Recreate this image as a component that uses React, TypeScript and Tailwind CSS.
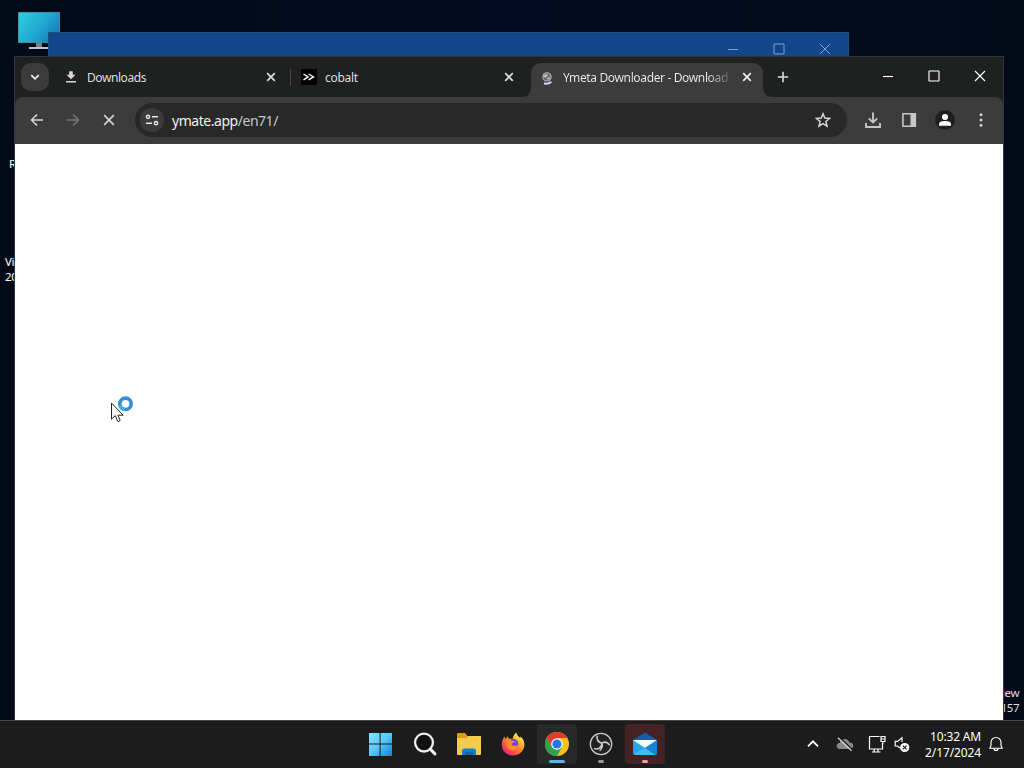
import React from "react";

const CloseIcon = ({ className = "" }: { className?: string }) => (
  <svg viewBox="0 0 16 16" className={`h-4 w-4 shrink-0 ${className}`} fill="none" stroke="currentColor" strokeWidth="1.7">
    <path d="M4.2 4.2l7.6 7.6M11.8 4.2l-7.6 7.6" />
  </svg>
);

const WindowControls = ({ thin = false }: { thin?: boolean }) => (
  <div className="flex">
    {["M6 11.5h10", "M6.5 6h9q.5 0 .5.5v9q0 .5-.5.5h-9q-.5 0-.5-.5v-9q0-.5.5-.5z", "M6 6l10 10M16 6L6 16"].map((d) => (
      <div key={d} className="flex h-full w-[46px] items-center justify-center">
        <svg viewBox="0 0 22 22" className="h-[22px] w-[22px]" fill="none" stroke="currentColor" strokeWidth={thin ? 0.9 : 1.15}>
          <path d={d} />
        </svg>
      </div>
    ))}
  </div>
);

const ToolButton = ({ children, className = "" }: { children: React.ReactNode; className?: string }) => (
  <div className={`flex w-9 items-center justify-center ${className}`}>{children}</div>
);

const TabStrip = () => (
  <div className="flex h-10 items-center bg-[#1f2020] text-[12px] text-[#dedede]">
    <div className="ml-1.5 flex h-7 w-7 shrink-0 items-center justify-center rounded-[10px] bg-[#3b3b3b]">
      <svg viewBox="0 0 12 12" className="h-3 w-3" fill="none" stroke="#eee" strokeWidth="1.7">
        <path d="M2.3 4.2L6 7.9l3.7-3.7" />
      </svg>
    </div>

    <div className="ml-2 flex w-[233px] items-center pl-1.5 pr-[11px]">
      <svg viewBox="0 0 16 16" className="h-4 w-4" fill="#d8d8d8">
        <path d="M6.2 2.2h3.6v3.5h2.7L8 10.3 3.5 5.7h2.7zM3 12h10v1.6H3z" />
      </svg>
      <span className="ml-2 flex-1 pt-0.5 tracking-[-0.035em]">Downloads</span>
      <CloseIcon />
    </div>
    <div className="h-[17px] w-px bg-[#4a4a4a]" />

    <div className="flex w-60 items-center pl-2.5 pr-3.5">
      <svg viewBox="0 0 16 16" className="h-4 w-4" fill="none" stroke="#fff" strokeWidth="1.4">
        <path d="M0 0h16v16H0z" fill="#000" stroke="none" />
        <path d="M2.5 5l4.7 2.9-4.7 3M7.6 5l4.9 2.9-4.9 3" />
      </svg>
      <span className="ml-2 flex-1 pt-0.5 tracking-[-0.025em]">cobalt</span>
      <CloseIcon />
    </div>

    <div className="relative flex h-[34px] w-[232px] items-center self-end rounded-t-[10px] bg-[#3c3c3c] px-2 pb-1.5">
      <svg viewBox="0 0 10 10" className="absolute -left-2.5 bottom-0 h-2.5 w-2.5" fill="#3c3c3c">
        <path d="M10 0v10H0Q10 10 10 0" />
      </svg>
      <svg viewBox="0 0 10 10" className="absolute -right-2.5 bottom-0 h-2.5 w-2.5" fill="#3c3c3c">
        <path d="M0 0v10h10Q0 10 0 0" />
      </svg>
      <svg viewBox="0 0 16 16" className="mt-px h-4 w-4 shrink-0">
        <circle cx="8" cy="6.9" r="4.1" fill="#686b70" stroke="#b2b5ba" strokeWidth="1.1" />
        <path d="M4.7 5l3-1 1.2 1.4-2 2-2-.2zM8.1 8.2l2.4-1.2.7 1.5L9 10.1z" fill="#b9bcc2" />
        <path d="M5 13.3q4.2 1.6 7.4-1.6" fill="none" stroke="#cdd3e4" strokeWidth="2" />
      </svg>
      <span className="ml-2 w-[168px] whitespace-nowrap bg-linear-to-r from-[#ececec] from-86% to-[#606060] to-99% bg-clip-text pt-0.5 tracking-[-0.03em] text-transparent">
        Ymeta Downloader - Download
      </span>
      <CloseIcon className="ml-2 text-[#eee]" />
    </div>

    <svg viewBox="0 0 16 16" className="ml-3 h-4 w-4" fill="none" stroke="#ddd" strokeWidth="1.6">
      <path d="M8 2.8v10.4M2.8 8h10.4" />
    </svg>
    <div className="ml-auto flex h-[38px] self-start text-white">
      <WindowControls />
    </div>
  </div>
);

const Toolbar = () => (
  <div className="flex h-[47px] bg-[#1f2020]">
    <div className="flex w-full rounded-t-lg bg-[#3c3c3c] px-1 pb-px text-[#d6d6d6]">
      <ToolButton>
        <svg viewBox="0 0 16 16" className="h-4 w-4" fill="none" stroke="currentColor" strokeWidth="1.6">
          <path d="M14 8H2.5M8 2.5L2.5 8 8 13.5" />
        </svg>
      </ToolButton>
      <ToolButton className="text-[#777]">
        <svg viewBox="0 0 16 16" className="h-4 w-4" fill="none" stroke="currentColor" strokeWidth="1.6">
          <path d="M2 8h11.5M8 2.5L13.5 8 8 13.5" />
        </svg>
      </ToolButton>
      <ToolButton>
        <svg viewBox="0 0 16 16" className="h-4 w-4" fill="none" stroke="currentColor" strokeWidth="1.7">
          <path d="M3.2 3.2l9.6 9.6M12.8 3.2l-9.6 9.6" />
        </svg>
      </ToolButton>

      {/* Address bar */}
      <div className="mx-2 mt-1.5 flex h-[34px] flex-1 items-center rounded-full bg-[#282828] pl-[5px] pr-4">
        <div className="flex h-6 w-6 items-center justify-center rounded-full bg-[#3b3b3b]">
          <svg viewBox="0 0 16 16" className="h-4 w-4" fill="none" stroke="#e3e3e3" strokeWidth="1.5">
            <circle cx="4" cy="4.8" r="1.6" />
            <circle cx="12" cy="11.2" r="1.6" />
            <path d="M8 4.8h6M2 11.2h6" />
          </svg>
        </div>
        <span className="ml-2 flex-1 text-[14px] tracking-[-0.033em] text-[#c6c6c6]">
          <span className="text-[#efefef]">ymate.app</span>/en71/
        </span>
        <svg viewBox="0 0 16 16" className="h-4 w-4" fill="none" stroke="#d6d6d6" strokeWidth="1.5">
          <path d="M8 1.8l1.8 4.3 4.7.4-3.6 3 1.1 4.6L8 11.7l-4 2.4 1.1-4.6-3.6-3 4.7-.4z" />
        </svg>
      </div>

      <ToolButton>
        <svg viewBox="0 0 18 18" className="h-[18px] w-[18px]" fill="none" stroke="#c6c6c6" strokeWidth="1.9">
          <path d="M9 1.5v9.7M4.8 7.4L9 11.5l4.2-4.1M2 12v4h14v-4" />
        </svg>
      </ToolButton>
      <ToolButton>
        <svg viewBox="0 0 16 16" className="h-4 w-4" fill="#c6c6c6">
          <path d="M1.9 1.8h12.4v12.4H1.9z" fill="none" stroke="#c6c6c6" strokeWidth="1.6" />
          <path d="M9.5 2h5v12h-5z" />
        </svg>
      </ToolButton>
      <ToolButton>
        <svg viewBox="0 0 22 22" className="h-[22px] w-[22px]" fill="#fff">
          <circle cx="11" cy="11" r="10" fill="#1f1f1f" />
          <circle cx="11" cy="7.9" r="3" />
          <path d="M5 16.8v-1.500q0-3.2 6-3.2t6 3.2v1.500z" />
        </svg>
      </ToolButton>
      <ToolButton>
        <svg viewBox="0 0 16 16" className="h-4 w-4" fill="#cfcfcf">
          <circle cx="8" cy="2.8" r="1.5" />
          <circle cx="8" cy="8" r="1.5" />
          <circle cx="8" cy="13.2" r="1.5" />
        </svg>
      </ToolButton>
    </div>
  </div>
);

const TaskItem = ({ children, className = "" }: { children: React.ReactNode; className?: string }) => (
  <div className="flex h-full w-[44px] items-center justify-center">
    <div className={`relative flex h-10 w-10 items-center justify-center rounded ${className}`}>{children}</div>
  </div>
);

const Taskbar = () => (
  <footer className="absolute inset-x-0 bottom-0 flex h-12 border-t border-[#464646] bg-[#1c1c1c] pb-px text-white">
    <div className="ml-[359px] flex">
      <TaskItem>
        <svg viewBox="0 0 24 24" className="mr-0.5 h-6 w-6">
          <defs>
            <linearGradient id="win" x1="0" y1="0" x2="24" y2="24" gradientUnits="userSpaceOnUse">
              <stop stopColor="#8be6ff" />
              <stop offset=".5" stopColor="#5bc9f7" />
              <stop offset="1" stopColor="#0c84dd" />
            </linearGradient>
          </defs>
          <path fill="url(#win)" d="M1 1h10.6v10.6H1zM12.6 1H24v10.6H12.6zM1 12.6h10.6V24H1zM12.6 12.6H24V24H12.6z" />
        </svg>
      </TaskItem>
      <TaskItem>
        <svg viewBox="0 0 24 24" className="h-6 w-6" fill="none" stroke="#f0f0f0">
          <circle cx="11" cy="10.6" r="8.9" fill="#111" strokeWidth="2.3" />
          <path d="M17.5 17.2l4.4 4.7" strokeWidth="3" strokeLinecap="round" />
        </svg>
      </TaskItem>
      <TaskItem>
        <svg viewBox="0 0 26 24" className="h-6 w-[26px]">
          <path d="M1 2q0-1 1-1h7l2.5 3H25v7H1z" fill="#d79b16" />
          <path d="M1 6h9.5l2-2H24q1 0 1 1v17q0 1-1 1H2q-1 0-1-1z" fill="#f4cb4a" />
          <path d="M6 23v-4q0-2.5 2.5-2.5h9Q20 16.5 20 19v4z" fill="#137fc9" />
          <path d="M9 20h8v3H9z" fill="#1263ab" />
        </svg>
      </TaskItem>
      <TaskItem>
        <svg viewBox="0 0 24 24" className="h-6 w-6">
          <defs>
            <linearGradient id="fox" x1="20" y1="3" x2="5" y2="22" gradientUnits="userSpaceOnUse">
              <stop stopColor="#fff44f" />
              <stop offset=".4" stopColor="#ff9b22" />
              <stop offset=".75" stopColor="#ff4b44" />
              <stop offset="1" stopColor="#e52482" />
            </linearGradient>
          </defs>
          <path
            d="M12 23.5C5.5 23.5.8 19 .8 12.6c0-3 1-5.6 2.8-8l.7 2.3L7 4.2l.6 2.6 4.2-.1C12 4 13.3 1.7 15.4.4c.2 2.6 2 3.6 3.8 5.6l.4-1.5c2.5 2.3 3.9 5.2 3.8 8.3-.2 6.1-5 10.7-11.4 10.7z"
            fill="url(#fox)"
          />
          <circle cx="12.4" cy="12" r="5" fill="#7543d8" />
          <path d="M4.5 9.3q3-2.2 6.5-.4l3 .3q-.3 1.7-3.4 2.1-.4 2.7 3 2.5 2.3-.2 3.7-1-1.1 5.5-6 5.4-6.8-.3-6.8-8.9z" fill="#ff8b28" />
        </svg>
      </TaskItem>
      <TaskItem className="bg-[#292929]">
        <svg viewBox="0 0 24 24" className="h-6 w-6">
          <circle cx="12" cy="12" r="12" fill="#fbc116" />
          <path d="M12 6h10.4A12 12 0 0 0 1.6 6l5.2 9z" fill="#e33b2e" />
          <path d="M1.6 6A12 12 0 0 0 12 24l5.2-9H6.8z" fill="#2da44e" />
          <circle cx="12" cy="12" r="5.8" fill="#fff" />
          <circle cx="12" cy="12" r="4.6" fill="#2776e9" />
        </svg>
        <span className="absolute bottom-px h-[3px] w-4 rounded-full bg-[#55b9ec]" />
      </TaskItem>
      <TaskItem>
        <svg viewBox="0 0 24 24" className="h-6 w-6" fill="none" stroke="#c9c9c9">
          <circle cx="12" cy="12" r="10.7" fill="#222124" strokeWidth="1.3" />
          <path d="M8.3 3.6q-1.4 5.6 4.4 7.6M20.6 13.2q-3-4.800-7.700-2.200M5 16.600q5.600 1.700 7.700-3.800M12.400 11q1.700 2.300.1 5.200-.6 1.500-2 2.400" strokeWidth="1.6" />
        </svg>
        <span className="absolute bottom-px h-[3px] w-1.5 rounded-full bg-[#999]" />
      </TaskItem>
      <TaskItem className="bg-[#442225]">
        <svg viewBox="0 0 24 24" className="h-6 w-6">
          <path d="M0 8L12 .5 24 8v5H0z" fill="#135da9" />
          <path d="M0 8h24v13q0 2-2 2H2q-2 0-2-2z" fill="#27a4ea" />
          <path d="M0 8h24L12 16z" fill="#f5fbff" />
          <path d="M24 8v13q0 2-2 2L8 13.5l4 2.5z" fill="#1686d3" />
          <path d="M1 22l11-6 10 7H2z" fill="#42baf2" />
        </svg>
        <span className="absolute bottom-px h-[3px] w-1.5 rounded-full bg-[#ff9ca3]" />
      </TaskItem>
    </div>

    {/* Tray */}
    <div className="ml-auto mr-5 flex items-center">
      <svg viewBox="0 0 14 14" className="h-3.5 w-3.5" fill="none" stroke="currentColor" strokeWidth="1.8">
        <path d="M2 9.3l5-5 5 5" />
      </svg>
      <svg viewBox="0 0 18 16" className="ml-4 h-4 w-[18px]">
        <path d="M4 13q-3.3 0-3.3-3 0-2.6 2.8-3Q5 3 9 3q3.2 0 4.4 3.6 3.7 0 3.8 3.2 0 3.2-3.8 3.2z" fill="#8a8a8a" />
        <path d="M3.1.8l13.5 13" stroke="#1c1c1c" strokeWidth="1.3" />
        <path d="M2 1.8l13.5 13" stroke="#d5d5d5" strokeWidth="1.2" />
      </svg>
      <svg viewBox="0 0 18 18" className="ml-3.5 h-[18px] w-[18px]" fill="none" stroke="currentColor" strokeWidth="1.2">
        <path d="M11.5 1.5h-10v12.500h13V8M6.2 14v3M10 14v3M4 17h8.5" />
        <path d="M13 1.5h4v5h-4zM13 4h4M15 6.500v2" />
      </svg>
      <svg viewBox="0 0 18 18" className="ml-[7px] mr-px h-[18px] w-[18px]" fill="none" stroke="currentColor" strokeWidth="1.2">
        <path d="M7 13L4.5 11H2.2V6.4h2.3L9 2.7v4.4" />
        <circle cx="11.7" cy="12.5" r="4.6" fill="#fff" stroke="none" />
        <path d="M9.8 10.6l3.8 3.8M13.6 10.6l-3.8 3.8" stroke="#222" />
      </svg>
      <div className="w-[69px] whitespace-nowrap pt-px text-right text-[12px] leading-4">
        <div className="tracking-[-0.015em]">10:32 AM</div>
        <div className="tracking-[-0.01em]">2/17/2024</div>
      </div>
      <svg viewBox="0 0 16 16" className="ml-[7px] h-4 w-4" fill="none" stroke="currentColor" strokeWidth="1.15">
        <path d="M1.8 12.2h12.4L13 9.5v-3a5 5 0 0 0-10 0v3zM6 12.5q0 2 2 2t2-2" />
      </svg>
    </div>
  </footer>
);

export default function App() {
  return (
    <div className="relative h-screen w-screen overflow-hidden bg-linear-to-r from-[#020a17] via-[#000c21] to-[#020b18] font-['Noto_Sans',sans-serif]">
      {/* Desktop icons */}
      <svg viewBox="0 0 42 38" className="absolute left-[18px] top-3 h-[38px] w-[42px]">
        <defs>
          <linearGradient id="pc" x1="0" y1="0" x2="42" y2="30" gradientUnits="userSpaceOnUse">
            <stop stopColor="#2bd0df" />
            <stop offset=".5" stopColor="#22a9d1" />
            <stop offset="1" stopColor="#126eb5" />
          </linearGradient>
        </defs>
        <path d="M.5.5h41v30H.5z" fill="url(#pc)" stroke="#55a8b8" strokeWidth=".7" />
        <path d="M18 31h6v4h-6z" fill="#72818b" />
        <path d="M11 35h20v2H11z" fill="#bdc4c8" />
      </svg>
      <div className="absolute left-[9px] top-[156px] text-[11.5px] leading-[15px] text-white">R</div>
      <div className="absolute left-[5px] top-[254px] text-[11.5px] leading-[15px] tracking-[-0.03em] text-white">
        Vi
        <br />
        20
      </div>
      <div className="absolute right-[5px] top-[685px] text-right text-[11.5px] leading-[15px] tracking-[-0.04em] text-[#ddd]">
        Preview
        <br />
        22157
      </div>

      {/* Window behind the browser */}
      <div className="absolute left-12 top-8 flex h-[100px] w-[801px] justify-end border border-[#224e82] bg-[#12468a] text-[#8cb0dc]">
        <div className="flex h-8">
          <WindowControls thin />
        </div>
      </div>

      {/* Browser */}
      <div className="absolute left-3.5 top-14 flex h-[664px] w-[990px] flex-col border-x border-t border-[#303742] bg-white">
        <TabStrip />
        <Toolbar />
      </div>

      <Taskbar />

      {/* Busy cursor */}
      <svg viewBox="0 0 24 28" className="absolute left-[110px] top-[395px] h-7 w-6">
        <path d="M1.5 8v16.3l3.8-3.7 2.3 5.6q1.2 1 2.6-.9l-2.3-5.1h5.2z" fill="#fff" stroke="#222" strokeWidth="1" />
        <circle cx="15.5" cy="8.8" r="5.7" fill="none" stroke="#378bd3" strokeWidth="3.6" />
        <path d="M10 10.5a5.7 5.7 0 0 0 5 4" fill="none" stroke="#38b2ec" strokeWidth="3.6" />
      </svg>
    </div>
  );
}
